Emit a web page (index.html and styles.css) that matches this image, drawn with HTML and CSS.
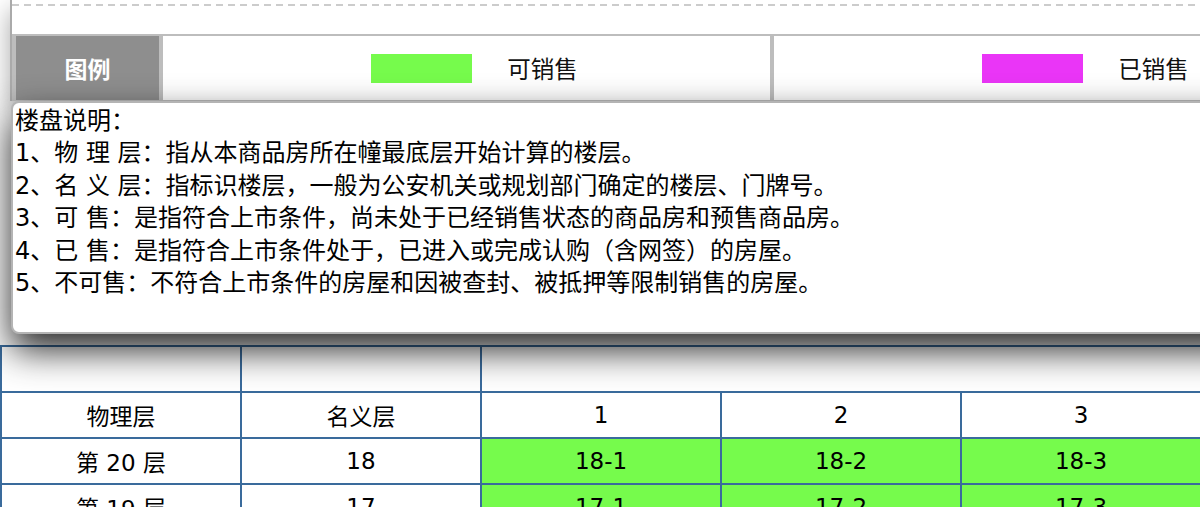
FILE: index.html
```html
<!DOCTYPE html>
<html lang="zh-CN">
<head>
<meta charset="utf-8">
<title>楼盘表</title>
<link rel="stylesheet" href="styles.css">
</head>
<body>
<div class="sheet">
  <div class="panel">
    <div class="dash-line"></div>
    <div class="legend">
      <div class="legend-title">图例</div>
      <div class="legend-item"><span class="swatch swatch-sale"></span><span class="legend-label">可销售</span></div>
      <div class="legend-item"><span class="swatch swatch-sold"></span><span class="legend-label">已销售</span></div>
    </div>
  </div>
  <div class="desc">
    <p>楼盘说明：</p>
    <p>1、物 理 层：指从本商品房所在幢最底层开始计算的楼层。</p>
    <p>2、名 义 层：指标识楼层，一般为公安机关或规划部门确定的楼层、门牌号。</p>
    <p>3、可 售：是指符合上市条件，尚未处于已经销售状态的商品房和预售商品房。</p>
    <p>4、已 售：是指符合上市条件处于，已进入或完成认购（含网签）的房屋。</p>
    <p>5、不可售：不符合上市条件的房屋和因被查封、被抵押等限制销售的房屋。</p>
  </div>
</div>
<table class="grid">
  <colgroup><col class="c"><col class="c"><col class="c"><col class="c"><col class="c"></colgroup>
  <tr><td></td><td></td><td colspan="3"></td></tr>
  <tr><td>物理层</td><td>名义层</td><td>1</td><td>2</td><td>3</td></tr>
  <tr><td>第 20 层</td><td>18</td><td class="sale">18-1</td><td class="sale">18-2</td><td class="sale">18-3</td></tr>
  <tr><td>第 19 层</td><td>17</td><td class="sale">17-1</td><td class="sale">17-2</td><td class="sale">17-3</td></tr>
</table>
</body>
</html>
```

FILE: styles.css
```css
html, body {
  margin: 0;
  padding: 0;
  background: #fff;
  overflow: hidden;
}
body {
  font-family: "DejaVu Sans", "Noto Sans CJK SC", sans-serif;
  color: #000;
}
.sheet {
  margin-left: 10px;
  width: 1420px;
}
.panel {
  background: #fff;
  border-left: 2px solid #aaaaaa;
  box-shadow: 0 10px 24px rgba(0, 0, 0, 0.35);
  padding-top: 4px;
}
.dash-line {
  height: 2px;
  background: repeating-linear-gradient(90deg, #cccccc 0 7px, transparent 7px 12px);
  margin-bottom: 28px;
}
.legend {
  display: flex;
  gap: 4px;
  background: #bdbdbd;
  padding: 2px 0 1px 4px;
}
.legend-title {
  flex: 0 0 143px;
  height: 64px;
  display: flex;
  align-items: center;
  justify-content: center;
  background: #8e8e8e;
  color: #fff;
  font-weight: bold;
  font-size: 23px;
}
.legend-item {
  flex: 0 0 607px;
  height: 64px;
  box-sizing: border-box;
  padding-left: 16px;
  display: flex;
  align-items: center;
  justify-content: center;
  gap: 35px;
  background: #fff;
  font-size: 23.5px;
  color: #111;
}
.swatch {
  display: block;
  width: 101px;
  height: 29px;
}
.swatch-sale { background: #76fb4c; }
.swatch-sold { background: #ea35f7; }
.desc {
  position: relative;
  margin-left: 1px;
  height: 233px;
  box-sizing: border-box;
  background: #fff;
  border: 2px solid #b4b4b4;
  border-radius: 8px;
  padding: 2px 0 0 2px;
  box-shadow: 0 16px 36px rgba(0, 0, 0, 0.85);
  font-size: 24px;
  line-height: 32.4px;
  color: #000;
}
.desc p {
  margin: 0;
  white-space: nowrap;
}
.grid {
  margin: 11px 0 0 0;
  border-collapse: collapse;
  table-layout: fixed;
  width: 1200px;
  font-size: 23px;
}
.grid .c { width: 240px; }
.grid td {
  border: 2px solid #3a6b9c;
  height: 44px;
  padding: 0;
  text-align: center;
  vertical-align: middle;
}
.grid td.sale { background: #76fb4c; }
```
